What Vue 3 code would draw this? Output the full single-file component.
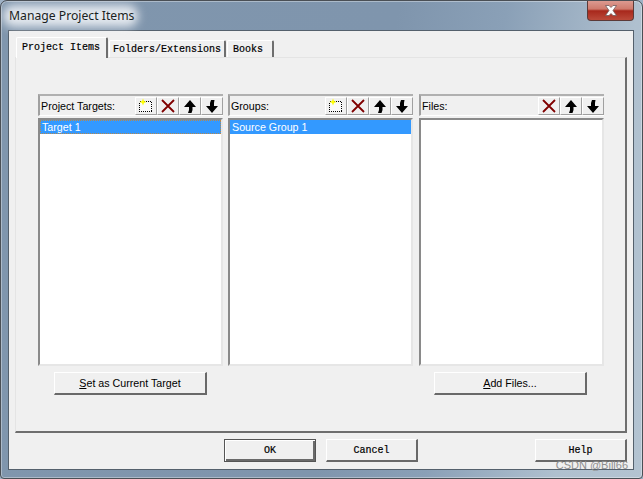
<script setup>
const panes = [
  { label: 'Project Targets:', item: 'Target 1', add: true, active: true },
  { label: 'Groups:', item: 'Source Group 1', add: true, active: false },
  { label: 'Files:', item: '', add: false, active: false },
]
</script>

<template>
  <div class="window">
    <div class="titlebar">
      <span class="title">Manage Project Items</span>
      <div class="close">
        <svg width="14" height="11" viewBox="0 0 14 11"><path d="M1.500 .5 L5 .5 L7 2.500 L9 .5 L12.500 .5 L9 5.500 L12.500 10.500 L9 10.500 L7 8.500 L5 10.500 L1.500 10.500 L5 5.500 Z" fill="#fff" stroke="#6e5a5c" stroke-width="0.8"/></svg>
      </div>
    </div>
    <div class="client">
      <div class="tabs">
        <div class="tab on">Project Items</div>
        <div class="tab">Folders/Extensions</div>
        <div class="tab last">Books</div>
      </div>
      <div class="page">
        <div class="panes">
          <div v-for="p in panes" :key="p.label" class="pane">
            <div class="head">
              <span class="label">{{ p.label }}</span>
              <div class="tools">
                <div v-if="p.add" class="tool">
                  <svg width="16" height="16" viewBox="0 0 16 16">
                    <rect x="1.500" y="3.500" width="12" height="10" fill="#fafafa" stroke="#000" stroke-dasharray="1 1" shape-rendering="crispEdges"/>
                    <path d="M5 .5 L6 3 L8.500 4 L6 5 L5 7.500 L4 5 L1.500 4 L4 3 Z" fill="#ffff00"/>
                  </svg>
                </div>
                <div class="tool">
                  <svg width="16" height="16" viewBox="0 0 16 16"><path d="M2 2 L14 14 M14 2 L2 14" stroke="#800000" stroke-width="1.800" fill="none"/></svg>
                </div>
                <div class="tool">
                  <svg width="16" height="16" viewBox="0 0 16 16"><path d="M8 2 L14 9 L10.500 9 L10.500 12 L9.500 15 L6 15 L7 12 L7 9 L2 9 Z" fill="#000"/></svg>
                </div>
                <div class="tool">
                  <svg width="16" height="16" viewBox="0 0 16 16"><path d="M8 15 L14 8 L10 8 L10 5 L10.500 2 L7 2 L6 5 L6 8 L2 8 Z" fill="#000"/></svg>
                </div>
              </div>
            </div>
            <div class="list">
              <div v-if="p.item" class="row" :class="{ focus: p.active }">{{ p.item }}</div>
            </div>
          </div>
        </div>
        <div class="actions">
          <button class="btn flat"><u>S</u>et as Current Target</button>
          <button class="btn flat"><u>A</u>dd Files...</button>
        </div>
      </div>
      <div class="footer">
        <button class="btn mono default">OK</button>
        <button class="btn mono">Cancel</button>
        <span class="spacer"></span>
        <button class="btn mono">Help</button>
      </div>
    </div>
    <span class="mark">CSDN @Bill66</span>
  </div>
</template>

<style>
html, body { margin: 0; background: #9fb2c6; }
</style>

<style scoped>
.window {
  position: relative;
  box-sizing: border-box;
  width: 643px;
  height: 479px;
  padding: 0 8px 8px 7px;
  display: flex;
  flex-direction: column;
  border: 1px solid #4a4f55;
  border-radius: 7px 7px 4px 4px;
  background: linear-gradient(100deg, #8096ad 0%, #7f95ad 55%, #8aa0b7 70%, #afc0cf 88%, #b3c3d1 100%);
  box-shadow: inset 0 0 0 1px rgba(255,255,255,.35);
  overflow: hidden;
  font-family: "Liberation Sans", Arial, sans-serif;
  font-size: 10.7px;
  color: #000;
}
.titlebar {
  height: 29px;
  flex: none;
  display: flex;
  align-items: flex-start;
  justify-content: space-between;
}
.title {
  position: relative;
  margin: 5px 0 0 1px;
  font-family: "Noto Sans", sans-serif;
  font-size: 12.2px;
  line-height: 20px;
  color: #1a1e22;
  z-index: 0;
}
.title::before {
  content: "";
  position: absolute;
  z-index: -1;
  left: -6px;
  right: -4px;
  top: -1px;
  bottom: -1px;
  border-radius: 10px;
  background: rgba(238,242,246,.9);
  filter: blur(5px);
}
.close {
  width: 47px;
  height: 20px;
  box-sizing: border-box;
  border: 1px solid #5b3a38;
  border-top: none;
  border-radius: 0 0 4px 4px;
  background: linear-gradient(#dc9a90 0%, #cf7a6c 42%, #a8281c 52%, #bb4a3a 100%);
  display: flex;
  align-items: center;
  justify-content: center;
}
.client {
  flex: 1;
  min-height: 0;
  display: flex;
  flex-direction: column;
  background: #f0f0f0;
  border: 1px solid #54606c;
  padding: 6px 6px 7px;
}
.tabs {
  display: flex;
  align-items: flex-end;
  height: 20px;
  flex: none;
  padding-left: 1px;
  position: relative;
  z-index: 1;
  font-family: "Liberation Mono", monospace;
  font-size: 10px;
  -webkit-text-stroke: 0.2px #000;
}
.tab {
  box-sizing: border-box;
  height: 17px;
  padding: 0 3px;
  line-height: 18px;
  background: #f0f0f0;
  border: 1px solid #fff;
  border-bottom: none;
  border-right: 2px solid #6e6e6e;
  border-radius: 2px 2px 0 0;
}
.tab.on {
  height: 21px;
  padding: 0 6px 0 5px;
  line-height: 19px;
  margin-bottom: -1px;
  margin-right: 1px;
}
.tab.last { padding: 0 9px 0 5px; margin-left: 1px; }
.page {
  flex: 1;
  box-sizing: border-box;
  display: flex;
  flex-direction: column;
  border-style: solid;
  border-color: #e4e4e4 #6e6e6e #6e6e6e #e4e4e4;
  border-width: 1px 2px 2px 1px;
  padding: 36px 21px 0 22px;
}
.panes {
  display: flex;
  gap: 5px;
}
.pane {
  width: 185px;
  flex: none;
}
.pane:last-child { margin-left: 1px; }
.head {
  box-sizing: border-box;
  height: 22px;
  display: flex;
  justify-content: space-between;
  align-items: flex-end;
  border-style: solid;
  border-width: 2px 0 1px 2px;
  border-color: #b0b0b0 #fff #fff #a0a0a0;
  padding-left: 1px;
}
.label { align-self: center; }
.tools { display: flex; }
.tool {
  width: 22px;
  height: 18px;
  box-sizing: border-box;
  display: flex;
  align-items: center;
  justify-content: center;
  border-style: solid;
  border-width: 1px;
  border-color: #fff #a0a0a0 #a0a0a0 #fff;
}
.list {
  box-sizing: border-box;
  height: 248px;
  margin-top: 2px;
  background: #fff;
  border: 2px solid;
  border-color: #8a8a8a #e6e6e6 #e6e6e6 #8a8a8a;
}
.row {
  height: 14px;
  line-height: 14px;
  padding-left: 2px;
  background: #3399ff;
  color: #fff;
}
.row.focus { outline: 1px dotted #b8884a; outline-offset: -1px; }
.actions {
  display: flex;
  justify-content: space-between;
  padding: 6px 17px 0 16px;
}
.btn {
  box-sizing: border-box;
  height: 23px;
  background: #f0f0f0;
  border-style: solid;
  border-color: #fff #696969 #696969 #fff;
  border-width: 1px 2px 2px 1px;
  padding: 0;
  color: #000;
}
.flat {
  width: 153px;
  font-family: "Liberation Sans", Arial, sans-serif;
  font-size: 10.7px;
}
.footer {
  flex: none;
  display: flex;
  gap: 10px;
  padding: 6px 0 0 209px;
}
.spacer { flex: 1; }
.mono {
  width: 92px;
  font-family: "Liberation Mono", monospace;
  font-size: 10px;
  -webkit-text-stroke: 0.2px #000;
}
.default {
  border: 1px solid #555;
  box-shadow: inset 1px 1px 0 #fff, inset -2px -2px 0 #6a6a6a;
}
.mark {
  position: absolute;
  right: 14px;
  bottom: 7px;
  font-size: 11px;
  color: #8f8f8f;
}
</style>
